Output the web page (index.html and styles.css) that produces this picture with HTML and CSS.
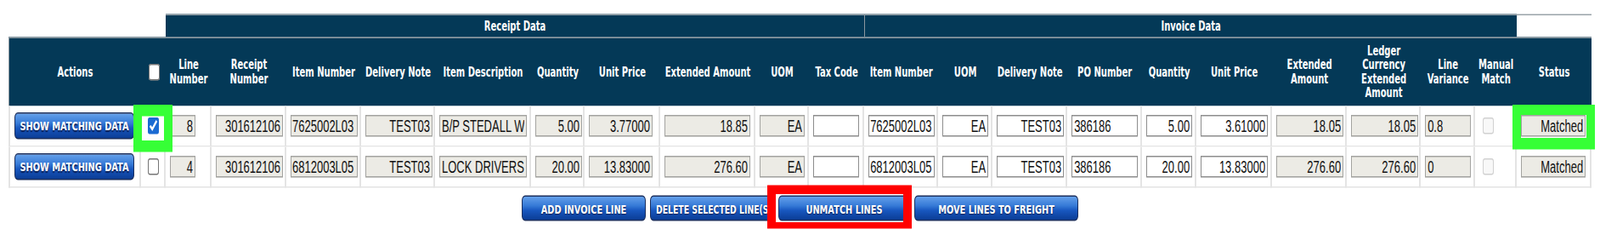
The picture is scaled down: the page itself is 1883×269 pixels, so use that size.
FILE: index.html
```html
<!DOCTYPE html>
<html lang="en">
<head>
<meta charset="utf-8">
<title>Match Lines</title>
<link rel="stylesheet" href="styles.css">
</head>
<body>
<div class="stage">
  <table class="match">
    <colgroup>
      <col class="c-actions"><col class="c-sel"><col class="c-line"><col class="c-rnum"><col class="c-item">
      <col class="c-dnote"><col class="c-desc"><col class="c-qty"><col class="c-price"><col class="c-ext">
      <col class="c-uom"><col class="c-tax"><col class="c-iitem"><col class="c-iuom"><col class="c-idnote">
      <col class="c-po"><col class="c-iqty"><col class="c-iprice"><col class="c-iext"><col class="c-ledger">
      <col class="c-var"><col class="c-manual"><col class="c-status">
    </colgroup>
    <thead>
      <tr class="grp">
        <th class="blank" colspan="2"></th>
        <th colspan="10">Receipt Data</th>
        <th class="inv" colspan="10">Invoice Data</th>
        <th class="tail"></th>
      </tr>
      <tr class="hdr">
        <th>Actions</th>
        <th><input type="checkbox" class="chk" aria-label="Select all"></th>
        <th>Line Number</th>
        <th>Receipt Number</th>
        <th>Item Number</th>
        <th>Delivery Note</th>
        <th>Item Description</th>
        <th>Quantity</th>
        <th>Unit Price</th>
        <th>Extended Amount</th>
        <th>UOM</th>
        <th>Tax Code</th>
        <th>Item Number</th>
        <th>UOM</th>
        <th>Delivery Note</th>
        <th>PO Number</th>
        <th>Quantity</th>
        <th>Unit Price</th>
        <th>Extended Amount</th>
        <th>Ledger Currency Extended Amount</th>
        <th>Line Variance</th>
        <th>Manual Match</th>
        <th>Status</th>
      </tr>
    </thead>
    <tbody>
      <tr class="row">
        <td><button class="btn show">SHOW MATCHING DATA</button></td>
        <td class="sel"><input type="checkbox" class="chk" checked aria-label="Select line 8"></td>
        <td><input class="fld ro r w-line" readonly value="8"></td>
        <td><input class="fld ro r w-79" readonly value="301612106"></td>
        <td><input class="fld ro l tight w-79" readonly value="7625002L03"></td>
        <td><input class="fld ro r w-79" readonly value="TEST03"></td>
        <td><input class="fld ro l w-desc" readonly value="B/P STEDALL W"></td>
        <td><input class="fld ro r w-55" readonly value="5.00"></td>
        <td><input class="fld ro r w-75" readonly value="3.77000"></td>
        <td><input class="fld ro r w-101" readonly value="18.85"></td>
        <td><input class="fld ro r w-53" readonly value="EA"></td>
        <td><input class="fld r w-54" value=""></td>
        <td><input class="fld l tight w-78" value="7625002L03"></td>
        <td><input class="fld r w-54" value="EA"></td>
        <td><input class="fld r w-79" value="TEST03"></td>
        <td><input class="fld l w-78" value="386186"></td>
        <td><input class="fld r w-54" value="5.00"></td>
        <td><input class="fld r w-79" value="3.61000"></td>
        <td><input class="fld ro r w-79" readonly value="18.05"></td>
        <td><input class="fld ro r w-79" readonly value="18.05"></td>
        <td><input class="fld ro l w-54" readonly value="0.8"></td>
        <td><input type="checkbox" class="chk" disabled aria-label="Manual match"></td>
        <td><input class="fld ro r w-76" readonly value="Matched"></td>
      </tr>
      <tr class="row">
        <td><button class="btn show">SHOW MATCHING DATA</button></td>
        <td class="sel"><input type="checkbox" class="chk" aria-label="Select line 4"></td>
        <td><input class="fld ro r w-line" readonly value="4"></td>
        <td><input class="fld ro r w-79" readonly value="301612106"></td>
        <td><input class="fld ro l tight w-79" readonly value="6812003L05"></td>
        <td><input class="fld ro r w-79" readonly value="TEST03"></td>
        <td><input class="fld ro l w-desc" readonly value="LOCK DRIVERS"></td>
        <td><input class="fld ro r w-55" readonly value="20.00"></td>
        <td><input class="fld ro r w-75" readonly value="13.83000"></td>
        <td><input class="fld ro r w-101" readonly value="276.60"></td>
        <td><input class="fld ro r w-53" readonly value="EA"></td>
        <td><input class="fld r w-54" value=""></td>
        <td><input class="fld l tight w-78" value="6812003L05"></td>
        <td><input class="fld r w-54" value="EA"></td>
        <td><input class="fld r w-79" value="TEST03"></td>
        <td><input class="fld l w-78" value="386186"></td>
        <td><input class="fld r w-54" value="20.00"></td>
        <td><input class="fld r w-79" value="13.83000"></td>
        <td><input class="fld ro r w-79" readonly value="276.60"></td>
        <td><input class="fld ro r w-79" readonly value="276.60"></td>
        <td><input class="fld ro l w-54" readonly value="0"></td>
        <td><input type="checkbox" class="chk" disabled aria-label="Manual match"></td>
        <td><input class="fld ro r w-76" readonly value="Matched"></td>
      </tr>
    </tbody>
  </table>

  <div class="bar">
    <button class="btn add">ADD INVOICE LINE</button>
    <button class="btn del">DELETE SELECTED LINE(S)</button>
    <button class="btn unmatch">UNMATCH LINES</button>
    <button class="btn move">MOVE LINES TO FREIGHT</button>
  </div>

  <div class="mark green mk-check"></div>
  <div class="mark green mk-status"></div>
  <div class="mark red mk-unmatch"></div>
</div>
</body>
</html>
```

FILE: styles.css
```css
* { box-sizing: border-box; }

html, body {
  margin: 0;
  padding: 0;
  background: #fff;
}

body {
  min-height: 269px;
}

/* The reference capture is stretched vertically by 1.5; the page is laid out
   at its natural size and stretched the same way. */
.stage {
  position: relative;
  width: 1883px;
  height: 179.33px;
  padding: 10.67px 10px 0;
  transform: scaleY(1.5);
  transform-origin: 0 0;
  margin-bottom: 89.67px;
}

.match {
  width: 1863px;
  table-layout: fixed;
  border-collapse: separate;
  border-spacing: 0;
  font-family: "Liberation Sans", Arial, sans-serif;
  font-size: 13px;
  color: #111;
}

.c-actions { width: 156px; }
.c-sel { width: 29px; }
.c-line { width: 54px; }
.c-rnum { width: 88px; }
.c-item { width: 88px; }
.c-dnote { width: 87px; }
.c-desc { width: 113px; }
.c-qty { width: 63px; }
.c-price { width: 89px; }
.c-ext { width: 112px; }
.c-uom { width: 63px; }
.c-tax { width: 65px; }
.c-iitem { width: 87px; }
.c-iuom { width: 64px; }
.c-idnote { width: 88px; }
.c-po { width: 88px; }
.c-iqty { width: 64px; }
.c-iprice { width: 89px; }
.c-iext { width: 88px; }
.c-ledger { width: 87px; }
.c-var { width: 64px; }
.c-manual { width: 49px; }
.c-status { width: 88px; }

.match th {
  background: #043957;
  color: #fff;
  font-family: "DejaVu Sans", Verdana, sans-serif;
  font-weight: bold;
  font-size: 10px;
  line-height: 11px;
  text-align: center;
  vertical-align: middle;
  padding: 0;
}

.grp { height: 18.67px; }
.grp th { border-top: 1px solid #9aa3a9; }
.grp th.blank { background: transparent; border-top: 0; }
.grp th.inv { border-left: 1px solid #8b979f; }
.grp th.tail { background: #fff; }

.hdr { height: 53.33px; }
.hdr th { border-top: 1px solid #8b979f; }
.hdr th:first-child { border-left: 1px solid #8b979f; }

.match td {
  border-right: 2px solid #e4e4e4;
  border-bottom: 1px solid #e4e4e4;
  padding: 0 0 0 5px;
  vertical-align: middle;
  white-space: nowrap;
  background: #fff;
}
.match td:first-child { border-left: 2px solid #e4e4e4; }
.match td.sel { text-align: center; padding: 0; }

.row { height: 32.33px; }

.chk {
  margin: 3px 3px 3px 4px;
  vertical-align: middle;
  accent-color: #1a6bd2;
}

.fld {
  display: block;
  height: 17.33px;
  margin: 0;
  padding: 0 2px;
  border: 1px solid #8d8d8d;
  border-radius: 0;
  background: #fff;
  font-family: "Liberation Sans", Arial, sans-serif;
  font-size: 13px;
  color: #111;
  outline: none;
}
.fld.ro {
  background: #ecebe5;
  border-color: #a3a3a0;
}
.fld.r { text-align: right; }
.fld.l { text-align: left; }
.fld.tight { padding: 0 1px; }

.w-line { width: 30px; }
.w-desc { width: 103px; }
.w-53 { width: 53px; }
.w-54 { width: 54px; }
.w-55 { width: 55px; }
.w-75 { width: 75px; }
.w-76 { width: 76px; }
.w-78 { width: 78px; }
.w-79 { width: 79px; }
.w-101 { width: 101px; }

.btn {
  display: block;
  height: 21.33px;
  margin: 0;
  padding: 0;
  border: 1px solid #1b2f5e;
  border-radius: 4px;
  background: linear-gradient(to bottom, #64a0ea 0%, #3579d6 40%, #1857bf 60%, #0b3d96 100%);
  color: #fff;
  font-family: "DejaVu Sans", Verdana, sans-serif;
  font-weight: bold;
  font-size: 9.8px;
  text-shadow: 0 1px 1px #0a1d50;
  white-space: nowrap;
  text-align: center;
}
.btn.show { width: 141px; }

.bar {
  display: flex;
  justify-content: center;
  gap: 5px;
  width: 1863px;
  margin-top: 6px;
}
.bar .btn { height: 20px; }
.btn.add { width: 146px; }
.btn.del {
  width: 146px;
  text-align: left;
  padding: 0 0 0 6px;
  font-size: 9.3px;
}
.btn.unmatch { width: 155px; }
.btn.move { width: 193px; }

.mark {
  position: absolute;
  border-style: solid;
  background: transparent;
}
.mark.green { border-color: #36ff36; }
.mark.red { border-color: #ff0000; }
.mk-check {
  left: 157px;
  top: 82px;
  width: 46px;
  height: 36.67px;
  border-width: 9.33px 10px;
}
.mk-status {
  left: 1780px;
  top: 82px;
  width: 97px;
  height: 34.67px;
  border-width: 8px 10px 9.33px;
}
.mk-unmatch {
  left: 903px;
  top: 145.33px;
  width: 170px;
  height: 34px;
  border-width: 7.33px 10px 5.33px;
}
```
